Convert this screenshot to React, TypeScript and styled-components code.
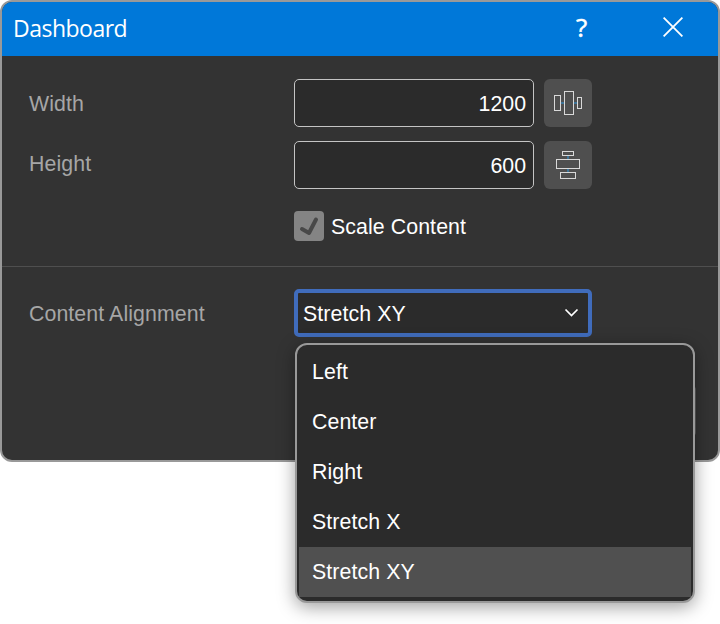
import React from "react";
import styled, { createGlobalStyle } from "styled-components";

const GlobalStyle = createGlobalStyle`
  * { box-sizing: border-box; }
  body {
    margin: 0;
    min-height: 624px;
    background: #fff;
    font-family: "Liberation Sans", Arial, sans-serif;
    font-size: 21.33px;
    letter-spacing: 0.08px;
  }
`;

const Window = styled.div`
  width: 720px;
  height: 462px;
  border: 2px solid #999;
  border-radius: 12px;
  background: #333;
`;

const TitleBar = styled.header`
  height: 54px;
  display: flex;
  align-items: center;
  background: #0078d9;
  border-radius: 10px 10px 0 0;
  color: #fff;
  font-family: "Open Sans", "Noto Sans", sans-serif;
`;

const Title = styled.h1`
  flex: 1;
  margin: 0;
  padding: 0 0 2px 11px;
  font-size: 23px;
  font-weight: 400;
  letter-spacing: -0.5px;
  line-height: 32px;
`;

const TitleButton = styled.button`
  width: 91px;
  height: 54px;
  padding: 0 0 4px;
  display: flex;
  align-items: center;
  justify-content: center;
  border: 0;
  background: transparent;
  color: #fff;
  font: 400 26px "Open Sans", sans-serif;
  -webkit-text-stroke: 0.5px #fff;
`;

const Row = styled.div<{ $h: number }>`
  display: grid;
  grid-template-columns: 265px 240px 48px;
  height: ${(p) => p.$h}px;
  padding-left: 27px;
`;

const SizeRows = styled.section`
  height: 211px;
  padding-top: 23px;
  border-bottom: 1px solid #4f4f4f;
`;

const Label = styled.label<{ $top?: number }>`
  color: #a6a6a6;
  line-height: 50px;
  margin-top: ${(p) => p.$top ?? 0}px;
`;

const NumberBox = styled.div`
  height: 48px;
  border: 1px solid #c4c4c4;
  border-radius: 5px;
  background: #2b2b2b;
  color: #fff;
  line-height: 49px;
  padding-right: 7px;
  text-align: right;
  letter-spacing: 0;
`;

const IconButton = styled.button`
  width: 48px;
  height: 48px;
  margin-left: 10px;
  padding: 0;
  border: 0;
  border-radius: 6px;
  background: #4f4f4f;

  svg { display: block; }
`;

const CheckLine = styled.div`
  grid-column: 2 / 4;
  display: flex;
  align-items: center;
  gap: 7px;
  height: 30px;
  margin-top: 8px;
  color: #fff;
  line-height: 32px;
  white-space: nowrap;
`;

const CheckBox = styled.span`
  width: 30px;
  height: 30px;
  border-radius: 4px;
  background: #848484;

  svg { display: block; }
`;

const CheckText = styled.span`
  padding-top: 2px;
`;

const SelectCell = styled.div`
  position: relative;
  width: 298px;
  height: 48px;
`;

const SelectBox = styled.div`
  height: 48px;
  display: flex;
  align-items: center;
  justify-content: space-between;
  padding: 0 9px 0 5px;
  border: 4px solid #406cbc;
  border-radius: 5px;
  background: #2b2b2b;
  color: #fff;
`;

const SelectValue = styled.span`
  padding-top: 2px;
`;

const Menu = styled.ul`
  position: absolute;
  top: 54px;
  left: 1px;
  width: 400px;
  height: 260px;
  margin: 0;
  padding: 2px;
  list-style: none;
  border: 2px solid #999;
  border-radius: 12px;
  background: #2b2b2b;
  box-shadow: 0 4px 18px rgba(0, 0, 0, 0.38);
`;

const Option = styled.li<{ $selected?: boolean }>`
  height: 50px;
  padding-left: 13px;
  line-height: 50px;
  color: #fff;
  background: ${(p) => (p.$selected ? "#505050" : "transparent")};
`;

const AlignSection = styled.section`
  padding-top: 22px;
`;

const Footer = styled.footer`
  display: flex;
  justify-content: flex-end;
  padding: 49px 22px 0 0;
`;

const FooterButton = styled.button`
  width: 120px;
  height: 50px;
  border: 0;
  border-radius: 4px;
  background: #5a5a5a;
`;

const DistributeX = () => (
  <svg width="48" height="48" fill="none">
    <path d="M17 24h3M30 24h3" stroke="#3d7397" strokeWidth="2" />
    <g stroke="#d9d9d9">
      <rect x="10.5" y="16.5" width="6" height="15" />
      <rect x="20.5" y="12.5" width="9" height="23" />
      <rect x="33.5" y="18.5" width="4" height="11" />
    </g>
  </svg>
);

const DistributeY = () => (
  <svg width="48" height="48" fill="none">
    <path d="M24 15v3M24 28v3" stroke="#3d7397" strokeWidth="2" />
    <g stroke="#d9d9d9">
      <rect x="18.5" y="10.5" width="11" height="4" />
      <rect x="12.5" y="18.5" width="23" height="9" />
      <rect x="16.5" y="31.5" width="15" height="6" />
    </g>
  </svg>
);

const options = ["Left", "Center", "Right", "Stretch X", "Stretch XY"];

export default function App() {
  return (
    <>
      <GlobalStyle />
      <Window>
        <TitleBar>
          <Title>Dashboard</Title>
          <TitleButton>?</TitleButton>
          <TitleButton>
            <svg width="20" height="20" fill="none" stroke="#fff" strokeWidth="1.8">
              <path d="M.6.6l18.8 18.8M19.4.6L.6 19.4" />
            </svg>
          </TitleButton>
        </TitleBar>
        <SizeRows>
          <Row $h={62}>
            <Label>Width</Label>
            <NumberBox>1200</NumberBox>
            <IconButton><DistributeX /></IconButton>
          </Row>
          <Row $h={62}>
            <Label $top={-2}>Height</Label>
            <NumberBox>600</NumberBox>
            <IconButton><DistributeY /></IconButton>
          </Row>
          <Row $h={38}>
            <CheckLine>
              <CheckBox>
                <svg width="30" height="30" fill="none" stroke="#484848" strokeWidth="4" strokeLinecap="round" strokeLinejoin="round">
                  <path d="M8 18l7 4 7-13.5" />
                </svg>
              </CheckBox>
              <CheckText>Scale Content</CheckText>
            </CheckLine>
          </Row>
        </SizeRows>
        <AlignSection>
          <Row $h={48}>
            <Label>Content Alignment</Label>
            <SelectCell>
              <SelectBox>
                <SelectValue>Stretch XY</SelectValue>
                <svg width="15" height="10" fill="none" stroke="#fff" strokeWidth="1.7">
                  <path d="M1.5 1.5l6 6 6-6" />
                </svg>
              </SelectBox>
              <Menu>
                {options.map((name) => (
                  <Option key={name} $selected={name === "Stretch XY"}>{name}</Option>
                ))}
              </Menu>
            </SelectCell>
          </Row>
        </AlignSection>
        <Footer><FooterButton aria-label="Close" /></Footer>
      </Window>
    </>
  );
}
